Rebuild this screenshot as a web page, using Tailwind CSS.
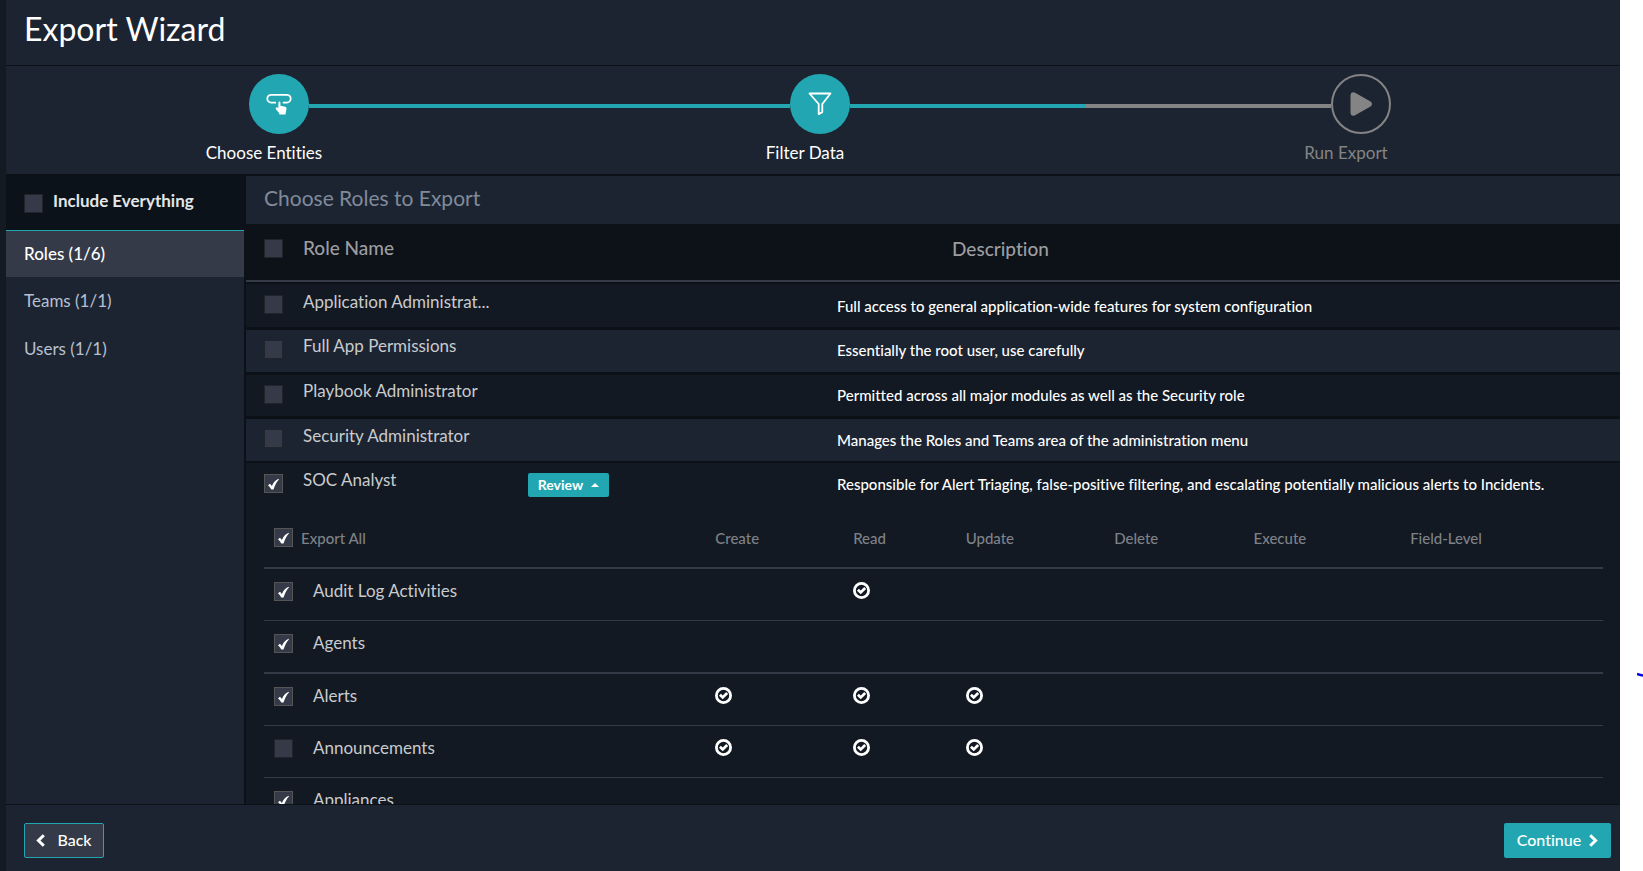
<!DOCTYPE html>
<html lang="en">

<head>
    <meta charset="UTF-8">
    <meta name="viewport" content="width=device-width, initial-scale=1.0">
    <title>Export Wizard</title>
    <script src="https://cdn.jsdelivr.net/npm/@tailwindcss/browser@4"></script>
</head>

<body class="h-screen flex bg-white font-['Lato','Open_Sans',sans-serif] [font-variant-ligatures:none] text-[17px] leading-6 text-[#c9cbce] overflow-hidden">

    <!-- shared icons -->
    <svg class="hidden">
        <symbol id="tick" viewBox="0 0 19 19">
            <path fill="#fff" d="M4 11.2 6 9.700l1.900 2.200C9.400 8.500 11.400 6.200 14.600 4.800l.3.6c-2.400 2.500-4.100 6-5.400 10.100H7.300C6.500 13.700 5.400 12.300 4 11.200z" />
        </symbol>
        <symbol id="allowed" viewBox="0 0 17 17">
            <circle cx="8.500" cy="8.500" r="7.100" fill="none" stroke="#fff" stroke-width="2.800" />
            <path fill="none" stroke="#fff" stroke-width="2.800" d="M4.900 7.800 7.700 10.400 12.200 6" />
        </symbol>
    </svg>

    <div class="flex-1 min-w-0 flex flex-col border-l-6 border-[#131a22] bg-[#1d2431]">

        <header class="h-[66px] shrink-0 border-b border-[#0c1118] px-[18px] flex items-center">
            <h1 class="text-[32px] leading-10 text-white pb-2">Export Wizard</h1>
        </header>

        <!-- Steps -->
        <nav aria-label="Steps" class="h-[110px] shrink-0 border-b-2 border-[#0c1118] pt-2">
            <div class="flex items-center pl-[243px] pr-[229px]">
                <div class="size-[60px] rounded-full bg-[#22a6b1] grid place-items-center">
                    <svg class="w-[26px] h-[22px]" viewBox="0 0 26 22">
                        <path fill="none" stroke="#fff" stroke-width="1.800" d="M10 9.600H5.200a3.900 3.900 0 0 1 0-7.800h15.600a3.900 3.900 0 0 1 0 7.800h-4" />
                        <path fill="#fff" d="M12.400 9.600a1 1 0 0 1 2 0v3.200l4.800 1c1 .3 1.500.9 1.300 1.900l-.7 3.600-.3 2.200h-6l-.6-1.700-3-3.600c-.8-1 .5-2.600 1.600-1.800l.9.700z" />
                    </svg>
                </div>
                <div class="flex-1 h-1 mt-1 bg-[#22a6b1]"></div>
                <div class="size-[60px] rounded-full bg-[#22a6b1] grid place-items-center">
                    <svg class="size-6" viewBox="0 0 24 24" fill="none" stroke="#fff" stroke-width="1.800" stroke-linejoin="round">
                        <path d="M1.500 1.500h21L14.300 12v8.100l-3.600 2V12z" />
                    </svg>
                </div>
                <div class="flex-1 h-1 mt-1 bg-[#848484]">
                    <div class="w-[49%] h-1 bg-[#22a6b1]"></div>
                </div>
                <div class="size-[60px] rounded-full border-2 border-[#848484] grid place-items-center">
                    <svg class="size-6" viewBox="0 0 24 24" fill="#848484">
                        <path d="M1.500 3.500C1.500.6 3.700-.6 6.100.8l15 8.400c2.500 1.400 2.500 4.200 0 5.600l-15 8.400c-2.400 1.400-4.600.2-4.600-2.700z" />
                    </svg>
                </div>
            </div>
            <div class="flex justify-between pl-[194px] pr-[210px] pt-[7px] text-white text-center">
                <span class="w-32">Choose Entities</span>
                <span class="w-32">Filter Data</span>
                <span class="w-32 text-[#848484]">Run Export</span>
            </div>
        </nav>

        <div class="flex-1 min-h-0 flex">

            <aside class="w-60 shrink-0 border-r-2 border-[#0c1118]">
                <label class="h-[55px] flex items-center gap-2.5 px-[18px] pb-1 bg-[#0b1219] border-b border-[#22a6b1] font-bold text-[#e4e6e8]">
                    <input type="checkbox" class="appearance-none size-[19px] shrink-0 mt-1 border border-[#20242b] bg-[#343a48]">
                    Include Everything
                </label>
                <a href="#roles" class="h-[46px] flex items-center px-[18px] bg-[#343a47] font-medium text-white">Roles (1/6)</a>
                <a href="#teams" class="h-12 flex items-center px-[18px] text-[#b6c0d0]">Teams (1/1)</a>
                <a href="#users" class="h-12 flex items-center px-[18px] text-[#b6c0d0]">Users (1/1)</a>
            </aside>

            <main class="flex-1 min-w-0 overflow-hidden bg-[#121922]">
                <h2 class="h-12 flex items-center px-[18px] pb-1 bg-[#1d2431] text-[21px] text-[#7f8a9b]">Choose Roles to Export</h2>

                <table class="w-full table-fixed border-collapse text-left">
                    <colgroup>
                        <col class="w-[57px]">
                        <col class="w-[225px]">
                        <col class="w-[309px]">
                        <col>
                    </colgroup>
                    <thead class="bg-[#0d1118] text-[19px] text-[#9b9da0]">
                        <tr class="h-[57px] border-b-2 border-[#343a48]">
                            <th class="pl-[18px] pb-2"><input type="checkbox" aria-label="Select all roles" class="appearance-none block size-[19px] border border-[#20242b] bg-[#343a48]"></th>
                            <th class="pb-2 font-medium">Role Name</th>
                            <th></th>
                            <th class="pl-[115px] pb-1.5 font-medium">Description</th>
                        </tr>
                    </thead>
                    <tbody>
                        <tr class="h-[47px] border-b-3 border-b-[#0c1118] shadow-[inset_0_3px_0_#0c1118]">
                            <td class="pl-[18px]"><input type="checkbox" id="role-app" class="appearance-none block size-[19px] border border-[#20242b] bg-[#343a48]"></td>
                            <td class="pb-1 truncate"><label for="role-app">Application Administrat...</label></td>
                            <td></td>
                            <td class="pt-1 text-[15px] font-medium text-white">Full access to general application-wide features for system configuration</td>
                        </tr>
                        <tr class="h-[45px] bg-[#1d2431] border-b-3 border-[#0c1118]">
                            <td class="pl-[18px] pb-0.5"><input type="checkbox" id="role-full" class="appearance-none block size-[19px] border border-[#20242b] bg-[#343a48]"></td>
                            <td class="pb-2.5"><label for="role-full">Full App Permissions</label></td>
                            <td></td>
                            <td class="pb-0.5 text-[15px] font-medium text-white">Essentially the root user, use carefully</td>
                        </tr>
                        <tr class="h-11 border-b-3 border-[#0c1118]">
                            <td class="pl-[18px] pb-0.5"><input type="checkbox" id="role-playbook" class="appearance-none block size-[19px] border border-[#20242b] bg-[#343a48]"></td>
                            <td class="pb-2"><label for="role-playbook">Playbook Administrator</label></td>
                            <td></td>
                            <td class="text-[15px] font-medium text-white">Permitted across all major modules as well as the Security role</td>
                        </tr>
                        <tr class="h-[45px] bg-[#1d2431] border-b-2 border-[#0c1118]">
                            <td class="pl-[18px] pb-0.5"><input type="checkbox" id="role-security" class="appearance-none block size-[19px] border border-[#20242b] bg-[#343a48]"></td>
                            <td class="pb-2"><label for="role-security">Security Administrator</label></td>
                            <td></td>
                            <td class="text-[15px] font-medium text-white">Manages the Roles and Teams area of the administration menu</td>
                        </tr>
                        <tr class="h-11">
                            <td class="pl-[18px] pb-0.5">
                                <span class="relative block size-[19px]">
                                    <input type="checkbox" id="role-soc" checked class="appearance-none block size-[19px] border border-[#555555] bg-[#343a48]">
                                    <svg class="absolute inset-0 size-[19px] pointer-events-none"><use href="#tick" /></svg>
                                </span>
                            </td>
                            <td class="pb-2.5"><label for="role-soc">SOC Analyst</label></td>
                            <td>
                                <button type="button" class="w-[81px] h-6 flex items-center justify-center gap-2 rounded-xs bg-[#22a6b1] text-sm font-bold text-white">
                                    Review
                                    <svg class="w-2 h-1" viewBox="0 0 8 4" fill="#fff"><path d="M0 4 4 0l4 4z" /></svg>
                                </button>
                            </td>
                            <td class="pb-0.5 text-[15px] font-medium text-white">Responsible for Alert Triaging, false-positive filtering, and escalating potentially malicious alerts to Incidents.</td>
                        </tr>
                    </tbody>
                </table>

                <!-- Permissions of the expanded role -->
                <div class="pl-[18px] pr-[17px] pt-0.5">
                    <table class="w-full table-fixed border-collapse text-left">
                        <colgroup>
                            <col class="w-[33.7%]">
                            <col class="w-[10.3%]">
                            <col class="w-[8.4%]">
                            <col class="w-[11.1%]">
                            <col class="w-[10.4%]">
                            <col class="w-[11.7%]">
                            <col class="w-[14.4%]">
                        </colgroup>
                        <thead class="text-[15px] text-[#7e8288]">
                            <tr class="h-[60px] border-b-2 border-[#343a48]">
                                <th class="pl-2.5 font-medium">
                                    <label class="flex items-center gap-2">
                                        <span class="relative block size-[19px]">
                                            <input type="checkbox" checked class="appearance-none block size-[19px] border border-[#555555] bg-[#343a48]">
                                            <svg class="absolute inset-0 size-[19px] pointer-events-none"><use href="#tick" /></svg>
                                        </span>
                                        Export All
                                    </label>
                                </th>
                                <th class="font-medium">Create</th>
                                <th class="font-medium">Read</th>
                                <th class="font-medium">Update</th>
                                <th class="font-medium">Delete</th>
                                <th class="font-medium">Execute</th>
                                <th class="font-medium">Field-Level</th>
                            </tr>
                        </thead>
                        <tbody>
                            <tr class="h-[52px] border-b border-[#343a48]">
                                <td class="pl-2.5 pb-1.5">
                                    <label class="flex items-center gap-5">
                                        <span class="relative block size-[19px]">
                                            <input type="checkbox" checked class="appearance-none block size-[19px] border border-[#555555] bg-[#343a48]">
                                            <svg class="absolute inset-0 size-[19px] pointer-events-none"><use href="#tick" /></svg>
                                        </span>
                                        Audit Log Activities
                                    </label>
                                </td>
                                <td></td>
                                <td class="pb-2"><svg class="size-[17px]" role="img" aria-label="Allowed"><use href="#allowed" /></svg></td>
                                <td></td>
                                <td></td>
                                <td></td>
                                <td></td>
                            </tr>
                            <tr class="h-[53px] border-b-2 border-[#343a48]">
                                <td class="pl-2.5 pb-1.5">
                                    <label class="flex items-center gap-5">
                                        <span class="relative block size-[19px]">
                                            <input type="checkbox" checked class="appearance-none block size-[19px] border border-[#555555] bg-[#343a48]">
                                            <svg class="absolute inset-0 size-[19px] pointer-events-none"><use href="#tick" /></svg>
                                        </span>
                                        Agents
                                    </label>
                                </td>
                                <td></td>
                                <td></td>
                                <td></td>
                                <td></td>
                                <td></td>
                                <td></td>
                            </tr>
                            <tr class="h-[52px] border-b border-[#343a48]">
                                <td class="pl-2.5 pb-1.5">
                                    <label class="flex items-center gap-5">
                                        <span class="relative block size-[19px]">
                                            <input type="checkbox" checked class="appearance-none block size-[19px] border border-[#555555] bg-[#343a48]">
                                            <svg class="absolute inset-0 size-[19px] pointer-events-none"><use href="#tick" /></svg>
                                        </span>
                                        Alerts
                                    </label>
                                </td>
                                <td class="pb-2"><svg class="size-[17px]" role="img" aria-label="Allowed"><use href="#allowed" /></svg></td>
                                <td class="pb-2"><svg class="size-[17px]" role="img" aria-label="Allowed"><use href="#allowed" /></svg></td>
                                <td class="pb-2"><svg class="size-[17px]" role="img" aria-label="Allowed"><use href="#allowed" /></svg></td>
                                <td></td>
                                <td></td>
                                <td></td>
                            </tr>
                            <tr class="h-[52px] border-b border-[#343a48]">
                                <td class="pl-2.5 pb-1.5">
                                    <label class="flex items-center gap-5">
                                        <input type="checkbox" class="appearance-none block size-[19px] border border-[#20242b] bg-[#343a48]">
                                        Announcements
                                    </label>
                                </td>
                                <td class="pb-2"><svg class="size-[17px]" role="img" aria-label="Allowed"><use href="#allowed" /></svg></td>
                                <td class="pb-2"><svg class="size-[17px]" role="img" aria-label="Allowed"><use href="#allowed" /></svg></td>
                                <td class="pb-2"><svg class="size-[17px]" role="img" aria-label="Allowed"><use href="#allowed" /></svg></td>
                                <td></td>
                                <td></td>
                                <td></td>
                            </tr>
                            <tr class="h-[52px] border-b border-[#343a48]">
                                <td class="pl-2.5 pb-1.5">
                                    <label class="flex items-center gap-5">
                                        <span class="relative block size-[19px]">
                                            <input type="checkbox" checked class="appearance-none block size-[19px] border border-[#555555] bg-[#343a48]">
                                            <svg class="absolute inset-0 size-[19px] pointer-events-none"><use href="#tick" /></svg>
                                        </span>
                                        Appliances
                                    </label>
                                </td>
                                <td></td>
                                <td></td>
                                <td></td>
                                <td></td>
                                <td></td>
                                <td></td>
                            </tr>
                        </tbody>
                    </table>
                </div>
            </main>
        </div>

        <footer class="h-[67px] shrink-0 border-t border-[#0c1118] pl-[18px] pr-[9px] pt-1 flex items-center justify-between text-base font-medium text-white">
            <button type="button" class="h-[35px] w-20 flex items-center justify-center gap-3 rounded-xs border border-[#22a6b1] bg-[#343a47]">
                <svg class="w-[9px] h-[13px]" viewBox="0 0 9 13" fill="none" stroke="#fff" stroke-width="3"><path d="M7.800 1.200 2.400 6.500l5.400 5.300" /></svg>
                Back
            </button>
            <button type="button" class="h-[35px] w-[107px] flex items-center justify-center gap-2 rounded-xs bg-[#22a6b1]">
                Continue
                <svg class="w-[9px] h-[13px]" viewBox="0 0 9 13" fill="none" stroke="#fff" stroke-width="3"><path d="m1.200 1.200 5.400 5.300-5.400 5.300" /></svg>
            </button>
        </footer>
    </div>

    <!-- page behind the wizard -->
    <div class="w-[23px] shrink-0 flex flex-col items-end pt-[672px]">
        <svg class="w-[6px] h-[6px]" viewBox="0 0 6 6" fill="none" stroke="#0000f0" stroke-width="2.500"><path d="M0 2c2 .8 4 1.500 6 1.500" /></svg>
    </div>

</body>

</html>
